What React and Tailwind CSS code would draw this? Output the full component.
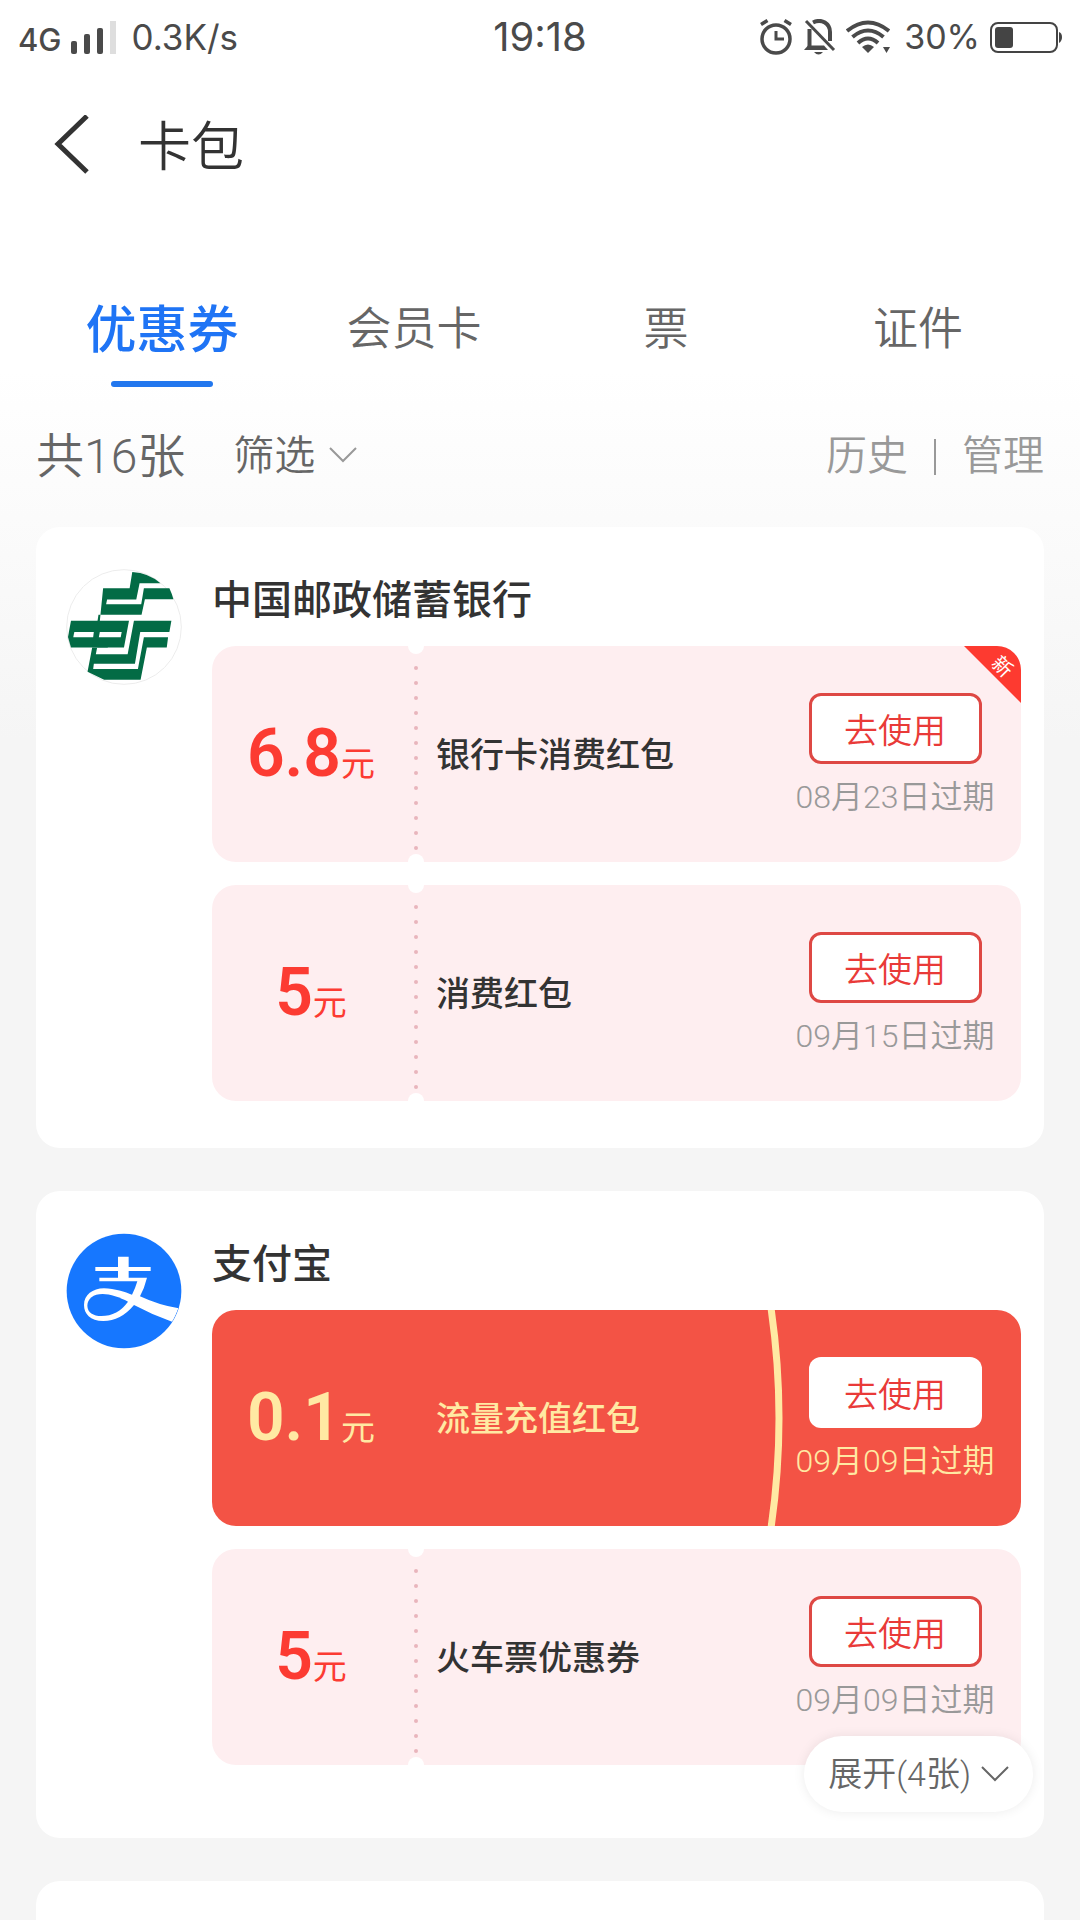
import { useState } from 'react';

const tabs = ['优惠券', '会员卡', '票', '证件'];

const groups = [
  {
    id: 'psbc',
    name: '中国邮政储蓄银行',
    Logo: PostalLogo,
    coupons: [
      { id: 1, amount: '6.8', title: '银行卡消费红包', expires: '08月23日过期', isNew: true },
      { id: 2, amount: '5', title: '消费红包', expires: '09月15日过期' },
    ],
  },
  {
    id: 'alipay',
    name: '支付宝',
    Logo: AlipayLogo,
    more: 4,
    coupons: [
      { id: 3, amount: '0.1', title: '流量充值红包', expires: '09月09日过期', featured: true },
      { id: 4, amount: '5', title: '火车票优惠券', expires: '09月09日过期' },
    ],
  },
];

function PostalLogo() {
  return (
    <svg className="w-full" viewBox="0 0 350 350" aria-hidden="true">
      <circle cx="175" cy="175" r="173" fill="#fff" stroke="#ececec" strokeWidth="3" />
      <g fill="#036b45">
        {/* top sweep */}
        <path d="M200 9Q250 12 285 43H222L212 92H124L121 106H227L235 58H312Q320 75 324 91H238L228 138H98L95 158H135L126 237H94L112 58H192Z" />
        {/* left arm */}
        <path d="M15 156H190L175 237H15L6 205Z" />
        {/* right stair */}
        <path d="M205 156H318L312 190H224L208 286H84L82 302H217L235 206H308L304 237H244L225 334H115L65 310L79 237H94L90 257H186Z" />
      </g>
      <g fill="#fff">
        <path d="M25 190H84L82 206H22Z" />
        <path d="M102 190H168L165 206H99Z" />
      </g>
    </svg>
  );
}

function AlipayLogo() {
  return (
    <svg className="w-full" viewBox="-2 -2 348 348" aria-hidden="true">
      <clipPath id="alipay-clip">
        <circle cx="172" cy="172" r="171" />
      </clipPath>
      <circle cx="172" cy="172" r="172" fill="#1677ff" />
      <g clipPath="url(#alipay-clip)">
        <g fill="#fff">
          <path d="M154 69H186V100H252V112H186V132H241Q233 164 220 188Q278 215 336 224L318 265Q258 244 202 214Q162 262 110 262C70 262 52 240 52 214C52 184 78 164 112 164C144 164 176 176 196 183Q206 164 212 143H98V132H154V112H86V100H154Z" />
        </g>
        <path d="M184 204C160 191 130 181 108 181C80 181 62 195 62 216C62 236 80 247 104 247C136 247 164 232 184 204Z" fill="#1677ff" />
      </g>
    </svg>
  );
}

function AlarmIcon() {
  return (
    <svg className="h-9 w-8" viewBox="0 0 32 36" fill="none" stroke="currentColor" aria-hidden="true">
      <circle cx="16" cy="20" r="14" strokeWidth="3.500" />
      <path d="M16 12V20H24" strokeWidth="3" />
      <path d="M1 5.500L7.500 1.500M31 5.500L24.500 1.500" strokeWidth="3.500" />
    </svg>
  );
}

function MutedBellIcon() {
  return (
    <svg className="h-9 w-8" viewBox="0 0 32 36" fill="none" stroke="currentColor" aria-hidden="true">
      <path d="M2 2L30 31" strokeWidth="3" />
      <path d="M5.500 10V28M9 3.500C18 -1 26 5 26 13V22" strokeWidth="4" />
      <path d="M0 31L4 26.500H20L24 31Z" fill="currentColor" stroke="none" />
      <path d="M10 33H19Q14.500 38 10 33Z" fill="currentColor" stroke="none" />
    </svg>
  );
}

function WifiIcon() {
  return (
    <svg className="h-9 w-11" viewBox="0 0 44 36" fill="none" stroke="currentColor" aria-hidden="true">
      <path d="M1 12Q22 -5 43 12" strokeWidth="4" />
      <path d="M6.500 18Q22 5 37.500 18" strokeWidth="4" />
      <path d="M12 24Q22 15 32 24" strokeWidth="4" />
      <path d="M16 28Q22 23 28 28L22 34Z" fill="currentColor" stroke="none" />
      <path d="M37 28H44L40.500 34Z" fill="currentColor" stroke="none" />
    </svg>
  );
}

function ChevronDown() {
  return (
    <svg className="h-4 w-7" viewBox="0 0 28 16" fill="none" stroke="currentColor" strokeWidth="2" aria-hidden="true">
      <path d="M1 1L14 14L27 1" />
    </svg>
  );
}

function StatusBar() {
  return (
    <div className="grid h-[74px] grid-cols-3 items-center px-[18px] font-['Inter','Noto_Sans_CJK_SC',sans-serif] text-[35px] leading-none text-[#4a4a4a]">
      <div className="flex items-center">
        <span className="pt-1 text-[31px] font-medium">4G</span>
        <svg className="ml-2 h-9 w-12" viewBox="0 0 48 36" fill="currentColor" aria-hidden="true">
          <rect x="1" y="22" width="6" height="13" rx="2" />
          <rect x="14" y="15" width="6" height="20" rx="2" />
          <rect x="27" y="9" width="6" height="26" rx="2" />
          <rect x="40" y="2" width="6" height="33" fill="#dedede" />
        </svg>
        <span className="ml-3.5">0.3K/s</span>
      </div>
      <time className="text-center text-[40px]">19:18</time>
      <div className="flex items-center justify-end">
        <AlarmIcon />
        <span className="ml-3"><MutedBellIcon /></span>
        <span className="ml-2.5"><WifiIcon /></span>
        <span className="ml-3.5 text-[34px]">30%</span>
        <svg className="ml-2.5 h-9 w-18" viewBox="0 0 72 36" aria-hidden="true">
          <rect x="1" y="4" width="66" height="29" rx="7" fill="none" stroke="#444" strokeWidth="2" />
          <rect x="5" y="8" width="18" height="21" rx="3" fill="#444" />
          <path d="M69 13Q72 14 72 18T69 24Z" fill="#444" />
        </svg>
      </div>
    </div>
  );
}

function Coupon({ coupon }) {
  const { amount, title, expires, isNew, featured } = coupon;

  return (
    <li
      className={`relative flex h-[216px] overflow-hidden rounded-3xl ${
        featured ? 'bg-[#f35345] text-[#ffe9a3]' : 'bg-[#feeef0] text-[#333]'
      }`}
    >
      <div
        className={`flex w-51 shrink-0 items-baseline justify-center pt-[68px] pr-1.5 ${
          featured ? '' : 'text-[#fc3b32]'
        }`}
      >
        <span className="font-['Roboto',sans-serif] text-[66px] leading-20 font-semibold">{amount}</span>
        <span className="text-[34px]">元</span>
      </div>

      {!featured && (
        <div className="relative w-0">
          <span className="absolute -top-2 -left-2 size-4 rounded-full bg-white" />
          <span className="absolute -bottom-2 -left-2 size-4 rounded-full bg-white" />
          <svg className="absolute top-5 -left-0.5 h-[184px] w-1" viewBox="0 0 4 184" aria-hidden="true">
            <path d="M2 2V184" stroke="#e9b5bc" strokeWidth="4" strokeLinecap="round" strokeDasharray="0 15" />
          </svg>
        </div>
      )}

      <h3 className="flex flex-1 items-center pb-1 pl-5 text-[34px] font-medium">{title}</h3>

      {featured && (
        <svg className="h-full w-5 shrink-0" viewBox="0 0 20 216" fill="none" aria-hidden="true">
          <path d="M6 -2Q22 108 6 218" stroke="#ffe9a3" strokeWidth="7" />
        </svg>
      )}

      <div className={`flex shrink-0 flex-col items-center pt-[47px] ${featured ? 'w-59 pr-4' : 'w-[252px]'}`}>
        <button
          type="button"
          className={`h-[71px] w-[173px] rounded-xl bg-white text-[34px] leading-none font-[350] text-[#e93a38] ${
            featured ? '' : 'border-3 border-[#de4844]'
          }`}
        >
          去使用
        </button>
        <p
          className={`mt-[13px] font-['Roboto','Noto_Sans_CJK_SC',sans-serif] text-[32px] leading-10 font-[350] whitespace-nowrap ${
            featured ? '' : 'text-[#999]'
          }`}
        >
          {expires}
        </p>
      </div>

      {isNew && (
        <>
          <div className="absolute top-0 right-0 size-[57px] bg-[#fd3a30] [clip-path:polygon(0_0,100%_0,100%_100%)]" />
          <span className="absolute top-2 right-2 rotate-45 text-[20px] leading-6 text-white">新</span>
        </>
      )}
    </li>
  );
}

function CouponGroup({ group }) {
  const { name, Logo, coupons, more } = group;

  return (
    <section className={`relative flex gap-[30px] rounded-3xl bg-white pt-10 pr-[23px] pl-[30px] ${more ? 'pb-[73px]' : 'pb-[47px]'}`}>
      <div className="mt-0.5 w-[116px] shrink-0">
        <Logo />
      </div>
      <div className="min-w-0 flex-1">
        <h2 className="mt-0.5 mb-[21px] text-[40px] leading-14 font-medium text-[#333]">{name}</h2>
        <ul className="flex flex-col gap-[23px]">
          {coupons.map(coupon => (
            <Coupon key={coupon.id} coupon={coupon} />
          ))}
        </ul>
      </div>
      {more && (
        <button
          type="button"
          className="absolute right-[11px] bottom-[26px] flex h-19 items-center gap-2.5 rounded-full bg-white px-6 font-['Roboto','Noto_Sans_CJK_SC',sans-serif] text-[34px] font-[350] text-[#666] shadow-[0_0_12px_rgba(0,0,0,0.08)]"
        >
          展开({more}张)
          <ChevronDown />
        </button>
      )}
    </section>
  );
}

export default function App() {
  const [activeTab, setActiveTab] = useState('优惠券');

  return (
    <div className="h-screen overflow-hidden bg-[#f5f5f5] bg-[linear-gradient(#fff_370px,#f5f5f5_740px)] font-['Noto_Sans_CJK_SC',sans-serif]">
      <StatusBar />

      <header className="flex h-[142px] items-center px-12">
        <button type="button" aria-label="返回" className="p-1">
          <svg className="h-15 w-10" viewBox="0 0 40 60" fill="none" stroke="#333" strokeWidth="5" aria-hidden="true">
            <path d="M35 1L6 29L35 57" />
          </svg>
        </button>
        <h1 className="ml-[42px] pb-1 text-[53px] leading-none font-[350] text-[#333]">卡包</h1>
      </header>

      <nav className="mt-[50px] grid grid-cols-4 px-9">
        {tabs.map(tab => (
          <button
            key={tab}
            type="button"
            onClick={() => setActiveTab(tab)}
            className={`flex h-[121px] flex-col items-center justify-between pt-6 leading-18 ${
              tab === activeTab ? 'text-[51px] font-medium text-[#1f74f5]' : 'text-[45px] font-[350] text-[#666]'
            }`}
          >
            {tab}
            {tab === activeTab && <span className="h-1.5 w-[102px] rounded-full bg-[#2277ee]" />}
          </button>
        ))}
      </nav>

      <div className="flex h-[140px] items-center px-9 font-['Roboto','Noto_Sans_CJK_SC',sans-serif] text-[41px] font-[350] text-[#666]">
        <p className="text-[48px]">共16张</p>
        <button type="button" className="ml-12 flex items-center gap-3.5">
          筛选
          <span className="pb-1 text-[#999]"><ChevronDown /></span>
        </button>
        <div className="ml-auto flex items-center text-[#999]">
          <a href="#history">历史</a>
          <span className="mx-[26px] h-9 w-0.5 bg-[#999]" />
          <a href="#manage">管理</a>
        </div>
      </div>

      <main className="flex flex-col gap-[43px] px-9">
        {groups.map(group => (
          <CouponGroup key={group.id} group={group} />
        ))}
        <section className="h-60 rounded-3xl bg-white" />
      </main>
    </div>
  );
}
